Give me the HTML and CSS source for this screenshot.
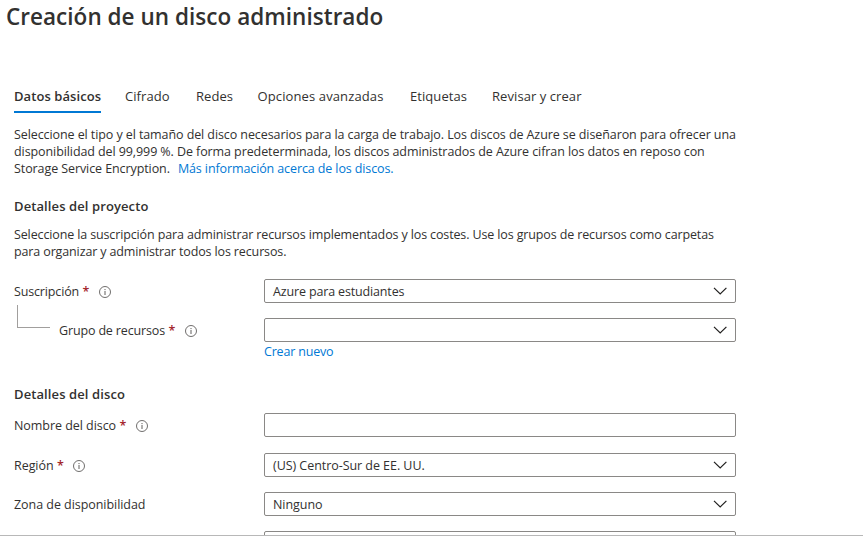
FILE: index.html
```html
<!DOCTYPE html>
<html lang="es">
<head>
<meta charset="utf-8">
<title>Creación de un disco administrado</title>
<link rel="stylesheet" href="styles.css">
</head>
<body>
<svg class="defs" aria-hidden="true">
  <symbol id="info" viewBox="0 0 12 12"><circle cx="6" cy="6" r="5.5" fill="none" stroke="#605e5c" stroke-width=".9"/><path d="M6 5v4M6 3v1.1" fill="none" stroke="#605e5c"/></symbol>
  <symbol id="chevron" viewBox="0 0 14 8"><path d="M1 .9 7.2 7 13.4 .9" fill="none" stroke="#201f1e" stroke-width="1.2"/></symbol>
</svg>
<main class="blade">
  <h1 class="title">Creación de un disco administrado</h1>
  <nav class="tabs">
    <a class="tab active">Datos básicos</a>
    <a class="tab cifrado">Cifrado</a>
    <a class="tab redes">Redes</a>
    <a class="tab opciones">Opciones avanzadas</a>
    <a class="tab etiquetas">Etiquetas</a>
    <a class="tab revisar">Revisar y crear</a>
  </nav>
  <p class="text intro">
    Seleccione el tipo y el tamaño del disco necesarios para la carga de trabajo. Los discos de Azure se diseñaron para ofrecer una<br>
    disponibilidad del 99,999 %. De forma predeterminada, los discos administrados de Azure cifran los datos en reposo con<br>
    Storage Service Encryption.<a class="link more">Más información acerca de los discos.</a>
  </p>
  <h2 class="heading project">Detalles del proyecto</h2>
  <p class="text tight">
    Seleccione la suscripción para administrar recursos implementados y los costes. Use los grupos de recursos como carpetas<br>
    para organizar y administrar todos los recursos.
  </p>
  <section class="fields project-fields">
    <div class="row"><label class="label"><span>Suscripción</span><b class="req">*</b><svg class="info"><use href="#info"/></svg></label>
      <div class="box"><span>Azure para estudiantes</span><svg class="chevron"><use href="#chevron"/></svg></div></div>
    <div class="row"><label class="label child"><i class="branch"></i><span>Grupo de recursos</span><b class="req">*</b><svg class="info"><use href="#info"/></svg></label>
      <div class="box"><svg class="chevron"><use href="#chevron"/></svg></div></div>
  </section>
  <a class="link create">Crear nuevo</a>
  <h2 class="heading disk">Detalles del disco</h2>
  <section class="fields disk-fields">
    <div class="row name"><label class="label"><span>Nombre del disco</span><b class="req">*</b><svg class="info"><use href="#info"/></svg></label>
      <div class="box"></div></div>
    <div class="row"><label class="label"><span>Región</span><b class="req">*</b><svg class="info"><use href="#info"/></svg></label>
      <div class="box"><span>(US) Centro-Sur de EE. UU.</span><svg class="chevron"><use href="#chevron"/></svg></div></div>
    <div class="row"><label class="label"><span>Zona de disponibilidad</span></label>
      <div class="box"><span>Ninguno</span><svg class="chevron"><use href="#chevron"/></svg></div></div>
    <div class="row"><label class="label"></label><div class="box"></div></div>
  </section>
</main>
<footer class="footer"></footer>
</body>
</html>
```
FILE: styles.css
```css
* { box-sizing: border-box; }
body {
  margin: 0;
  height: 536px;
  overflow: hidden;
  display: flex;
  flex-direction: column;
  background: #fff;
  color: #323130;
  font: 12.5px/17px "Open Sans", "Noto Sans", sans-serif;
}
.defs { display: none; }
.blade { height: 535px; overflow: hidden; padding-left: 14px; white-space: nowrap; }
.footer { height: 1px; background: #b8b8b8; }
.title { margin: 0 0 0 -8px; height: 86px; padding-top: 2px; font-size: 22.5px; line-height: 30px; font-weight: 600; letter-spacing: .03px; }
.tabs { display: flex; height: 27px; font-size: 13px; letter-spacing: .07px; }
.tab { height: 27px; line-height: 21px; }
.tab.active { width: 87px; margin-right: 24px; font-weight: 600; border-bottom: 2px solid #0078d4; }
.cifrado { width: 71px; }
.redes { width: 61.5px; }
.opciones { width: 152.5px; letter-spacing: .12px; }
.etiquetas { width: 82px; }
.text { margin: 0; }
.intro { margin-top: 13px; letter-spacing: -.088px; }
.tight { letter-spacing: -.13px; }
.link { color: #0078d4; }
.more { margin-left: 8px; letter-spacing: -.11px; }
.heading { margin: 0; font-size: 13px; line-height: 20px; font-weight: 600; letter-spacing: .1px; }
.project { margin-top: 19px; margin-bottom: 10px; }
.fields { display: flex; flex-direction: column; gap: 15px; }
.project-fields { margin-top: 19px; letter-spacing: -.15px; }
.row { display: grid; grid-template-columns: 250px 472px; height: 24px; }
.row.name { margin-bottom: 1px; }
.label { display: flex; align-items: center; position: relative; }
.label.child { padding-left: 45px; }
.branch { position: absolute; left: 3px; top: -13px; width: 33px; height: 23px; border-left: 1px solid #a19f9d; border-bottom: 1px solid #a19f9d; }
.req { margin-left: 3.5px; color: #a4262c; font-weight: 600; }
.info { width: 12px; height: 12px; margin: 2px 0 0 9.5px; }
.box { display: flex; align-items: center; height: 24px; padding: 0 8px; border: 1px solid #8a8886; border-radius: 2px; }
.chevron { width: 14px; height: 8px; margin-left: auto; }
.create { display: block; margin: 1px 0 0 250px; letter-spacing: -.18px; }
.disk { margin-top: 24px; }
.disk-fields { margin-top: 9px; letter-spacing: -.05px; }
```
